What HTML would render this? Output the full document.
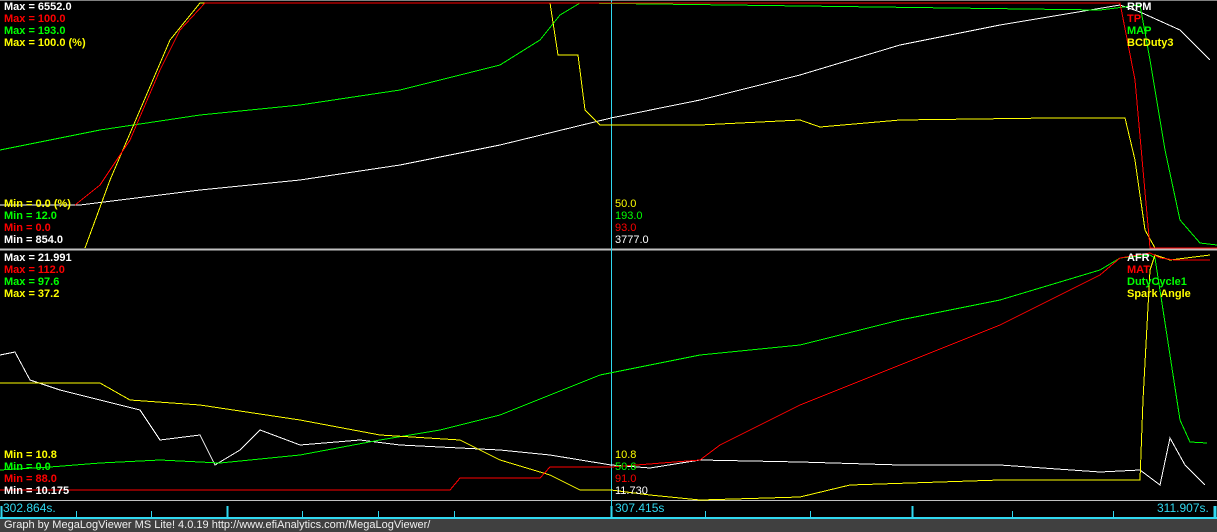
<!DOCTYPE html>
<html><head><style>
body{margin:0;background:#000;width:1217px;height:532px;overflow:hidden;position:relative;font-family:"Liberation Sans",sans-serif}
.t{position:absolute;font-size:11px;font-weight:bold;line-height:12px;white-space:nowrap}
.n{position:absolute;font-size:11px;line-height:12px;white-space:nowrap}
.w{color:#fff}.r{color:#f00}.g{color:#0f0}.y{color:#ff0}
</style></head><body>
<svg width="1217" height="532" style="position:absolute;left:0;top:0" fill="none" stroke-width="1" shape-rendering="crispEdges">
<line x1="0" y1="249.5" x2="1217" y2="249.5" stroke="#c0c0c0" stroke-width="2"/>
<line x1="0" y1="500.5" x2="1217" y2="500.5" stroke="#c0c0c0"/>
<line x1="0" y1="0.5" x2="1217" y2="0.5" stroke="#808080"/>
<line x1="611.5" y1="0" x2="611.5" y2="518" stroke="#30d8f0"/>
<line x1="0" y1="518" x2="1217" y2="518" stroke="#30d8f0" stroke-width="2"/>
<g stroke="#30d8f0"><line x1="76.5" y1="511" x2="76.5" y2="518"/><line x1="151.5" y1="511" x2="151.5" y2="518"/><line x1="227.5" y1="506" x2="227.5" y2="518" stroke-width="2"/><line x1="302.5" y1="511" x2="302.5" y2="518"/><line x1="378.5" y1="511" x2="378.5" y2="518"/><line x1="454.5" y1="511" x2="454.5" y2="518"/><line x1="611.5" y1="506" x2="611.5" y2="518" stroke-width="2"/><line x1="705.5" y1="511" x2="705.5" y2="518"/><line x1="810.5" y1="511" x2="810.5" y2="518"/><line x1="912.5" y1="506" x2="912.5" y2="518" stroke-width="2"/><line x1="1012.5" y1="511" x2="1012.5" y2="518"/><line x1="1113.5" y1="511" x2="1113.5" y2="518"/><line x1="1215" y1="506" x2="1215" y2="518" stroke-width="3"/><line x1="1.5" y1="506" x2="1.5" y2="518" stroke-width="2"/></g>
<polyline stroke="#fff" points="0,205 80,205 200,190 300,180 400,165 500,145 611,118 700,100 800,75 900,45 1000,25 1120,5 1140,12 1180,30 1210,60"/>
<polyline stroke="#0f0" points="0,150 100,130 200,115 300,105 400,90 500,65 540,40 560,15 580,3 1100,10 1140,5 1150,60 1165,150 1180,220 1200,243 1217,245"/>
<polyline stroke="#ff0" points="85,248 110,180 140,110 170,40 200,3 550,3 558,55 578,55 585,110 600,125 700,125 800,120 820,127 900,120 1050,118 1125,118 1135,160 1145,230 1155,248"/>
<polyline stroke="#f00" points="75,205 100,185 130,140 160,70 180,30 205,3 1120,3 1135,80 1150,248 1217,248"/>
<polyline stroke="#fff" points="0,355 15,352 30,380 60,390 100,400 140,410 160,440 200,435 215,465 240,450 260,430 300,445 360,440 400,445 500,450 550,455 611,465 650,468 700,460 800,462 900,465 1000,465 1100,472 1140,470 1160,485 1170,438 1185,465 1205,485"/>
<polyline stroke="#0f0" points="0,470 50,467 100,463 160,460 220,463 300,455 380,440 440,430 500,415 550,395 600,375 650,365 700,355 800,345 900,320 1000,300 1100,270 1120,258 1150,255 1155,258 1180,420 1190,442 1207,443"/>
<polyline stroke="#ff0" points="0,383 100,383 130,400 200,405 300,420 380,435 460,440 500,460 550,475 580,490 611,490 650,495 700,500 800,497 850,485 1000,480 1140,480 1143,400 1150,270 1155,255 1170,260 1210,255"/>
<polyline stroke="#f00" points="0,490 450,490 460,478 540,478 550,467 611,467 700,460 720,445 750,430 800,405 850,385 900,365 950,345 1000,325 1050,300 1100,275 1120,258 1150,253 1160,258 1175,260 1210,260"/>
</svg>
<div class="t w" style="left:4px;top:1px">Max = 6552.0</div>
<div class="t r" style="left:4px;top:13px">Max = 100.0</div>
<div class="t g" style="left:4px;top:25px">Max = 193.0</div>
<div class="t y" style="left:4px;top:37px">Max = 100.0 (%)</div>
<div class="t y" style="left:4px;top:198px">Min = 0.0 (%)</div>
<div class="t g" style="left:4px;top:210px">Min = 12.0</div>
<div class="t r" style="left:4px;top:222px">Min = 0.0</div>
<div class="t w" style="left:4px;top:234px">Min = 854.0</div>
<div class="n y" style="left:615px;top:198px">50.0</div>
<div class="n g" style="left:615px;top:210px">193.0</div>
<div class="n r" style="left:615px;top:222px">93.0</div>
<div class="n w" style="left:615px;top:234px">3777.0</div>
<div class="t w" style="left:1127px;top:1px">RPM</div>
<div class="t r" style="left:1127px;top:13px">TP</div>
<div class="t g" style="left:1127px;top:25px">MAP</div>
<div class="t y" style="left:1127px;top:37px">BCDuty3</div>
<div class="t w" style="left:4px;top:252px">Max = 21.991</div>
<div class="t r" style="left:4px;top:264px">Max = 112.0</div>
<div class="t g" style="left:4px;top:276px">Max = 97.6</div>
<div class="t y" style="left:4px;top:288px">Max = 37.2</div>
<div class="t y" style="left:4px;top:449px">Min = 10.8</div>
<div class="t g" style="left:4px;top:461px">Min = 0.0</div>
<div class="t r" style="left:4px;top:473px">Min = 88.0</div>
<div class="t w" style="left:4px;top:485px">Min = 10.175</div>
<div class="n y" style="left:615px;top:449px">10.8</div>
<div class="n g" style="left:615px;top:461px">50.6</div>
<div class="n r" style="left:615px;top:473px">91.0</div>
<div class="n w" style="left:615px;top:485px">11.730</div>
<div class="t w" style="left:1127px;top:252px">AFR</div>
<div class="t r" style="left:1127px;top:264px">MAT</div>
<div class="t g" style="left:1127px;top:276px">DutyCycle1</div>
<div class="t y" style="left:1127px;top:288px">Spark Angle</div>
<div class="n" style="left:3px;top:502px;color:#30d8f0;font-size:12px">302.864s.</div>
<div class="n" style="left:615px;top:502px;color:#30d8f0;font-size:12px">307.415s</div>
<div class="n" style="left:1157px;top:502px;color:#30d8f0;font-size:12px">311.907s.</div>
<div style="position:absolute;left:0;top:519px;width:1217px;height:13px;background:#404040"></div>
<div class="n" style="left:4px;top:519px;color:#f0f0f0;font-size:11px;line-height:13px">Graph by MegaLogViewer MS Lite! 4.0.19 http://www.efiAnalytics.com/MegaLogViewer/</div>
</body></html>
